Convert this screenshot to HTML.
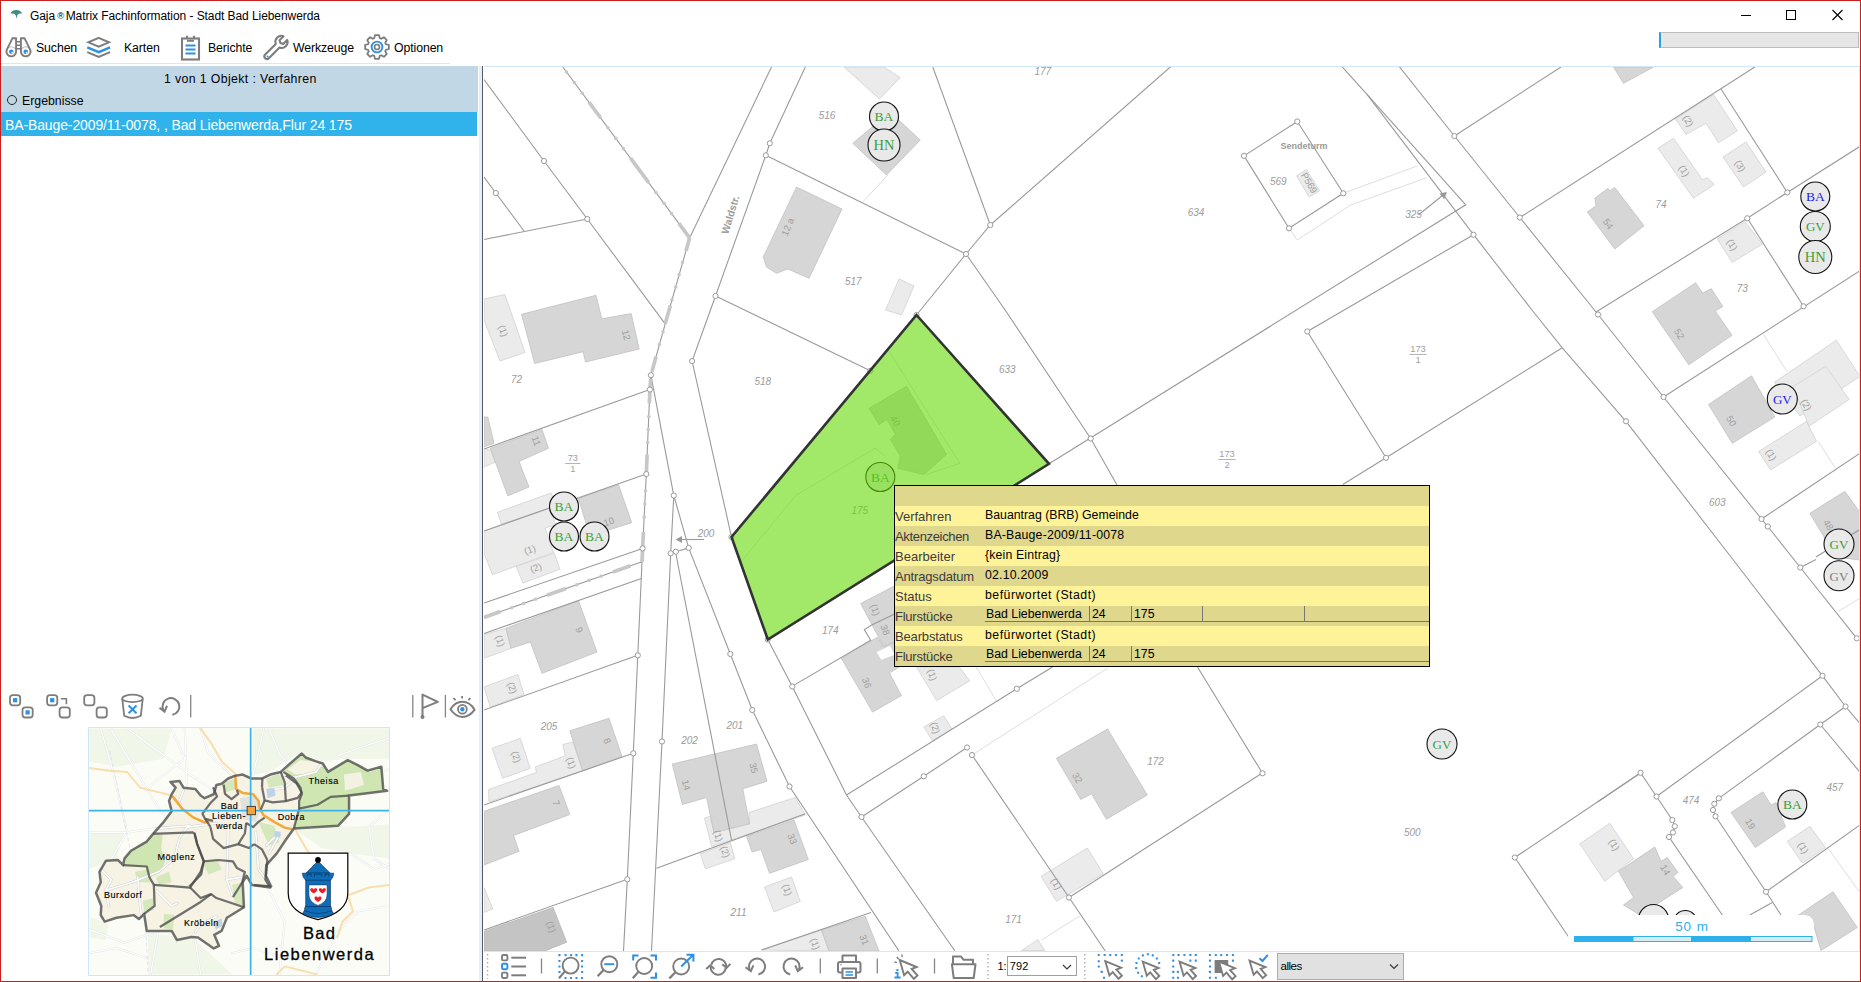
<!DOCTYPE html>
<html><head><meta charset="utf-8"><title>Gaja Matrix</title><style>
*{box-sizing:border-box}
html,body{margin:0;padding:0}
body{width:1861px;height:982px;position:relative;overflow:hidden;background:#fff;font-family:"Liberation Sans",sans-serif;font-size:12px;color:#000}
.abs{position:absolute}
.t{position:absolute;white-space:nowrap;line-height:1}
svg{position:absolute;overflow:visible}
</style></head><body>
<svg style="left:0;top:0" width="30" height="30" viewBox="0 0 30 30"><path d="M10.6,13.6 Q11.6,10 16.3,10 Q21,10 21.9,13.6 Q19,13.2 17.4,15 L16.5,18.6 L15.6,15 Q14,13.2 10.6,13.6 Z" fill="#3d8f88"/></svg>
<div class="t" id="title" style="left:30px;top:10px;font-size:12px;letter-spacing:-0.07px">Gaja<span style="font-size:9.5px;position:relative;top:-1.5px;display:inline-block;width:8px;text-align:center;margin:0 1px 0 1.6px;letter-spacing:0">&#174;</span>Matrix Fachinformation - Stadt Bad Liebenwerda</div>
<svg style="left:1735px;top:5px" width="115" height="20" viewBox="1735 5 115 20"><path d="M1741,15.5 H1751" stroke="#000" stroke-width="1"/><rect x="1786.5" y="10.5" width="9" height="9" fill="none" stroke="#000" stroke-width="1"/><path d="M1832.5,10 L1842.5,20 M1842.5,10 L1832.5,20" stroke="#000" stroke-width="1.1"/></svg>
<div class="abs" style="left:1659px;top:32px;width:200px;height:16px;background:#e6e6e6;border:1px solid #bcbcbc;border-left:2px solid #26a0da"></div>
<svg style="left:0;top:30px" width="40" height="34" viewBox="0 30 40 34"><g fill="none" stroke="#7d7d7d" stroke-width="1.9" stroke-linejoin="round"><path d="M12.4,38.3 H16.1 V51.6 A4.85,4.85 0 1 1 6.7,49.8 Z"/><path d="M24.6,38.3 H20.9 V51.6 A4.85,4.85 0 1 0 30.3,49.8 Z"/><path d="M16.1,41.8 H20.9 M16.1,45.3 H20.9 M16.1,48.8 H20.9" stroke-width="1.6"/><circle cx="11.3" cy="51.6" r="4.85" stroke-width="1.2" stroke-opacity="0.55"/><circle cx="25.7" cy="51.6" r="4.85" stroke-width="1.2" stroke-opacity="0.55"/></g><circle cx="11.3" cy="51.8" r="2.3" fill="#2e8fe3"/><circle cx="25.7" cy="51.8" r="2.3" fill="#2e8fe3"/><circle cx="12.2" cy="52.6" r="0.9" fill="#fff"/><circle cx="26.6" cy="52.6" r="0.9" fill="#fff"/></svg><svg style="left:80px;top:30px" width="40" height="34" viewBox="80 30 40 34"><g fill="none" stroke-linejoin="miter"><path d="M98.7,37.9 L109,42.3 L98.7,46.7 L88.4,42.3 Z" stroke="#7d7d7d" stroke-width="2"/><path d="M87.3,47.3 L98.7,52.2 L110.1,47.3" stroke="#2e8fe3" stroke-width="2.5"/><path d="M87.3,52.1 L98.7,57 L110.1,52.1" stroke="#7d7d7d" stroke-width="2"/></g></svg><svg style="left:181px;top:35px" width="19" height="26" viewBox="0 0 19 26"><g fill="none" stroke="#7d7d7d" stroke-width="2.1"><rect x="1" y="3.5" width="17" height="21"/><path d="M6,3.5 V0.8 M13,3.5 V0.8 M6,5.8 H13" /></g><g stroke="#2e8fe3" stroke-width="1.8"><path d="M4.5,10.5 H14.5 M4.5,14.5 H14.5 M4.5,18.5 H14.5"/></g></svg><svg style="left:262px;top:34px" width="27" height="27" viewBox="0 0 27 27"><path d="M3.2,20.5 L13.8,9.9 A6,6 0 0 1 21.5,2.2 L17.5,6.2 L18.4,9 L21.2,9.9 L25.2,5.9 A6,6 0 0 1 17.5,13.6 L6.9,24.2 A2.6,2.6 0 0 1 3.2,20.5 Z" fill="none" stroke="#7d7d7d" stroke-width="2.1" stroke-linejoin="round"/><circle cx="5.6" cy="22.4" r="1" fill="#2e8fe3"/></svg><svg style="left:363.5px;top:34px" width="26" height="26" viewBox="0 0 26 26"><path d="M21.88,10.25 L24.83,10.97 L24.83,15.03 L21.88,15.75 L21.23,17.34 L22.80,19.93 L19.93,22.80 L17.34,21.23 L15.75,21.88 L15.03,24.83 L10.97,24.83 L10.25,21.88 L8.66,21.23 L6.07,22.80 L3.20,19.93 L4.77,17.34 L4.12,15.75 L1.17,15.03 L1.17,10.97 L4.12,10.25 L4.77,8.66 L3.20,6.07 L6.07,3.20 L8.66,4.77 L10.25,4.12 L10.97,1.17 L15.03,1.17 L15.75,4.12 L17.34,4.77 L19.93,3.20 L22.80,6.07 L21.23,8.66 Z" fill="none" stroke="#7d7d7d" stroke-width="1.8" stroke-linejoin="round"/><circle cx="13" cy="13" r="5.4" fill="none" stroke="#2e8fe3" stroke-width="1.9"/><circle cx="13" cy="13" r="2.5" fill="none" stroke="#7d7d7d" stroke-width="1.7"/></svg>
<div class="t tb" style="left:36px;top:42px;font-size:12.3px;letter-spacing:-0.1px">Suchen</div>
<div class="t tb" style="left:124px;top:42px;font-size:12.3px;letter-spacing:-0.1px">Karten</div>
<div class="t tb" style="left:208px;top:42px;font-size:12.3px;letter-spacing:-0.1px">Berichte</div>
<div class="t tb" style="left:293px;top:42px;font-size:12.3px;letter-spacing:-0.1px">Werkzeuge</div>
<div class="t tb" style="left:394px;top:42px;font-size:12.3px;letter-spacing:-0.1px">Optionen</div>
<div class="abs" style="left:1px;top:63px;width:449px;height:1px;background:#e4e4e4"></div>
<div class="abs" style="left:1px;top:66px;width:477px;height:46px;background:#c2d7e6"></div>
<div class="t" id="hdr" style="left:164px;top:73px;font-size:12.3px;letter-spacing:0.38px">1 von 1 Objekt : Verfahren</div>
<div class="abs" style="left:6.8px;top:94.8px;width:10.6px;height:10.6px;border:1.3px solid #222;border-radius:50%"></div>
<div class="t" id="erg" style="left:22px;top:95px;font-size:12.3px">Ergebnisse</div>
<div class="abs" style="left:1px;top:112px;width:476px;height:24px;background:#30b2ea"></div>
<div class="t" id="row" style="left:5px;top:118px;font-size:14px;color:#fff;letter-spacing:-0.12px">BA-Bauge-2009/11-0078, , Bad Liebenwerda,Flur 24 175</div>
<svg style="left:0;top:690px" width="480" height="32" viewBox="0 690 480 32"><rect x="10" y="695.1" width="10.2" height="10.2" rx="2.8" fill="none" stroke="#7d7d7d" stroke-width="1.8"/><rect x="13" y="698.1" width="4.2" height="4.2" fill="#2e8fe3"/><rect x="22.5" y="707.3" width="10.2" height="10.2" rx="2.8" fill="none" stroke="#7d7d7d" stroke-width="1.8"/><rect x="25.5" y="710.3" width="4.2" height="4.2" fill="#2e8fe3"/><rect x="47.1" y="695.1" width="10.2" height="10.2" rx="2.8" fill="none" stroke="#7d7d7d" stroke-width="1.8"/><rect x="50.1" y="698.1" width="4.2" height="4.2" fill="#2e8fe3"/><rect x="59.6" y="707.3" width="10.2" height="10.2" rx="2.8" fill="none" stroke="#7d7d7d" stroke-width="1.8"/><path d="M60.8,698.8 H66.4 V704.2" fill="none" stroke="#7d7d7d" stroke-width="1.6"/><rect x="84.2" y="695.1" width="10.2" height="10.2" rx="2.8" fill="none" stroke="#7d7d7d" stroke-width="1.8"/><rect x="96.6" y="707.3" width="10.2" height="10.2" rx="2.8" fill="none" stroke="#7d7d7d" stroke-width="1.8"/><ellipse cx="132.5" cy="698.4" rx="10.3" ry="3.7" fill="none" stroke="#7d7d7d" stroke-width="1.8"/><path d="M122.3,699 L124.2,715.8 Q132.5,720.2 140.8,715.8 L142.7,699" fill="none" stroke="#7d7d7d" stroke-width="1.8"/><path d="M128.6,705.5 L136.5,713.2 M136.5,705.5 L128.6,713.2" stroke="#2e8fe3" stroke-width="1.9"/><path d="M172.4,714.8 A8.4,8.4 0 1 0 163.4,710.2" fill="none" stroke="#7d7d7d" stroke-width="2"/><path d="M159.5,707.8 L164.5,711.6 L167,705.8" fill="none" stroke="#7d7d7d" stroke-width="2"/><line x1="190.7" y1="695" x2="190.7" y2="717.5" stroke="#858585" stroke-width="1.3"/><line x1="412.8" y1="695" x2="412.8" y2="717.5" stroke="#858585" stroke-width="1.3"/><line x1="445.4" y1="695" x2="445.4" y2="717.5" stroke="#858585" stroke-width="1.3"/><path d="M422.5,717 V694.6 L437.8,701.8 L422.5,708.2" fill="none" stroke="#7d7d7d" stroke-width="2" stroke-linejoin="round"/><circle cx="422.5" cy="717" r="2" fill="#7d7d7d"/><path d="M450.5,709.3 C454,703.5 458.5,701.8 462.4,701.8 C466.5,701.8 471,703.5 474.5,709.8 C471,714.5 466.5,716.9 462.4,716.9 C458.5,716.9 454,714.5 450.5,709.3 Z" fill="none" stroke="#7d7d7d" stroke-width="2"/><circle cx="462.4" cy="709.2" r="4.4" fill="none" stroke="#7d7d7d" stroke-width="1.8"/><circle cx="462.4" cy="709.2" r="2.2" fill="#2e8fe3"/><path d="M453.4,698.1 L455.6,700.2 M462.1,696.1 V698.6 M470.4,698.1 L468.4,700.2" stroke="#7d7d7d" stroke-width="1.8"/></svg>
<div class="abs" style="left:88px;top:727px;width:302px;height:249px;border:1px solid #cfe6f7;background:#fcfcf6;overflow:hidden"><svg style="left:-4px;top:-6px" width="310" height="258" viewBox="0 0 1179.86 981.948"><polygon points="15,25 330,25 300,140 120,170 15,150" fill="#f0f6e8"/><polygon points="640,25 1160,25 1160,140 1000,140 900,150 820,115 700,190 640,200" fill="#f0f6e8"/><polygon points="240,800 420,830 560,960 240,960" fill="#f0f6e8"/><polygon points="15,420 150,420 120,520 15,560" fill="#f0f6e8"/><polygon points="800,410 1160,390 1160,520 1010,500 900,480" fill="#f0f6e8"/><polygon points="20,740 90,770 80,830 20,820" fill="#f0f6e8"/><g fill="none" stroke="#e3e5e8" stroke-width="8" stroke-linecap="round" stroke-linejoin="round"><polyline points="60,25 110,200 160,420 100,520"/><polyline points="15,420 160,420 300,400"/><polyline points="330,25 380,140 300,200 230,260"/><polyline points="440,25 470,120 560,205"/><polyline points="680,25 660,120 640,200"/><polyline points="1160,60 1040,100 960,130"/><polyline points="1160,330 1080,400 1100,520 1160,560"/><polyline points="700,640 760,760 740,960"/><polyline points="420,830 440,960"/><polyline points="15,880 120,860 240,900"/><polyline points="1160,700 1040,720 960,800 880,960"/><polyline points="560,880 640,860 760,900"/><polyline points="1010,500 1100,560 1160,540"/><polyline points="100,30 190,180 280,330 420,470 400,640 280,790 250,960"/><polyline points="15,790 150,840 290,790"/><polyline points="160,25 400,200 700,400"/><polyline points="380,25 390,300 330,420"/><polyline points="1160,180 1020,200 860,270 720,410"/><polyline points="700,25 740,120 850,250"/><polyline points="530,330 480,420 400,470"/></g><g fill="none" stroke="#ffffff" stroke-width="4.5" stroke-linecap="round" stroke-linejoin="round"><polyline points="60,25 110,200 160,420 100,520"/><polyline points="15,420 160,420 300,400"/><polyline points="330,25 380,140 300,200 230,260"/><polyline points="440,25 470,120 560,205"/><polyline points="680,25 660,120 640,200"/><polyline points="1160,60 1040,100 960,130"/><polyline points="1160,330 1080,400 1100,520 1160,560"/><polyline points="700,640 760,760 740,960"/><polyline points="420,830 440,960"/><polyline points="15,880 120,860 240,900"/><polyline points="1160,700 1040,720 960,800 880,960"/><polyline points="560,880 640,860 760,900"/><polyline points="1010,500 1100,560 1160,540"/><polyline points="100,30 190,180 280,330 420,470 400,640 280,790 250,960"/><polyline points="15,790 150,840 290,790"/><polyline points="160,25 400,200 700,400"/><polyline points="380,25 390,300 330,420"/><polyline points="1160,180 1020,200 860,270 720,410"/><polyline points="700,25 740,120 850,250"/><polyline points="530,330 480,420 400,470"/></g><g fill="none" stroke="#dcdfe2" stroke-width="3" stroke-dasharray="14 10"><polyline points="95,110 150,380 230,760 240,960"/></g><g fill="none" stroke="#f8dfb0" stroke-width="8" stroke-linecap="round"><polyline points="15,175 90,185 160,190 210,250 330,280"/><polyline points="440,25 480,80 520,150 575,200"/><polyline points="800,410 840,480 870,520"/><polyline points="1160,620 1080,630 1000,660 1020,720 980,760 960,820"/><polyline points="880,960 760,930 730,960"/></g><polygon points="570,205 545,215 520,235 500,240 490,275 455,290 440,280 420,255 375,250 360,225 325,228 345,250 330,275 320,300 330,340 300,380 260,425 235,455 175,490 150,520 145,545 125,525 80,528 55,570 60,610 42,650 62,700 60,735 75,760 120,745 185,735 205,750 225,730 235,795 330,795 350,830 405,818 430,820 490,862 510,852 492,810 520,795 540,745 605,705 600,610 615,585 635,620 705,630 687,600 690,545 730,500 763,450 795,405 963,395 1005,350 1005,280 1150,262 1135,255 1128,170 1075,185 1040,165 1000,145 925,190 905,158 880,150 840,135 825,120 790,150 745,190 705,200 675,215 633,215 600,200" fill="#f6f2e4"/><polygon points="755,190 790,150 825,120 840,135 880,150 905,158 925,190 1000,145 1040,165 1075,185 1128,170 1135,255 1150,262 1005,280 1005,350 963,395 795,405 815,330 815,300 825,275 820,250 795,215" fill="#cfe6b3"/><polygon points="820,145 880,152 900,165 870,195 800,200 770,180" fill="#f6f2e4"/><polygon points="985,200 1050,190 1062,240 990,262" fill="#f3f1e2"/><polygon points="150,520 175,490 235,455 260,425 295,430 290,480 305,530 285,575 250,592 235,550 145,545" fill="#cfe6b3"/><polygon points="190,570 240,560 250,610 200,610" fill="#d5e8bc"/><polygon points="270,590 320,570 330,610 280,620" fill="#d5e8bc"/><polygon points="560,620 600,610 605,700 570,690" fill="#d5e8bc"/><polygon points="520,235 570,215 575,255 530,270" fill="#d5e8bc"/><polygon points="660,380 720,395 740,460 700,470" fill="#d5e8bc"/><polygon points="450,540 500,520 520,560 470,580" fill="#d5e8bc"/><polygon points="300,730 340,735 335,790 300,785" fill="#d5e8bc"/><polygon points="220,680 260,670 262,715 225,725" fill="#d5e8bc"/><polygon points="690,215 745,195 755,240 700,250" fill="#d5e8bc"/><polygon points="590,290 650,280 670,330 650,380 600,370" fill="#dcdcdc" opacity="0.8"/><g fill="none" stroke="#cdd0d4" stroke-width="10" stroke-linecap="round" stroke-linejoin="round"><polyline points="80,640 180,610 280,570 340,520 360,440 390,400 500,385"/><polyline points="360,300 375,260"/><polyline points="545,400 540,600 560,660"/><polyline points="540,600 600,590"/><polyline points="650,420 660,560 690,600"/><polyline points="60,560 100,600 80,640 90,700"/><polyline points="270,405 400,395"/><polyline points="740,200 800,210 880,190 900,160"/><polyline points="700,260 760,250 800,215"/><polyline points="420,800 440,770 500,740"/><polyline points="700,500 740,430"/><polyline points="200,590 210,700 215,740"/><polyline points="270,640 330,700 350,690"/><polyline points="690,470 720,440"/></g><g fill="none" stroke="#ffffff" stroke-width="6" stroke-linecap="round" stroke-linejoin="round"><polyline points="80,640 180,610 280,570 340,520 360,440 390,400 500,385"/><polyline points="360,300 375,260"/><polyline points="545,400 540,600 560,660"/><polyline points="540,600 600,590"/><polyline points="650,420 660,560 690,600"/><polyline points="60,560 100,600 80,640 90,700"/><polyline points="270,405 400,395"/><polyline points="740,200 800,210 880,190 900,160"/><polyline points="700,260 760,250 800,215"/><polyline points="420,800 440,770 500,740"/><polyline points="700,500 740,430"/><polyline points="200,590 210,700 215,740"/><polyline points="270,640 330,700 350,690"/><polyline points="690,470 720,440"/></g><polygon points="690,255 720,250 725,280 695,290" fill="#bcd3ea"/><polygon points="720,415 745,418 742,440 722,436" fill="#bcd3ea"/><polygon points="490,760 520,748 522,775 498,790" fill="#bcd3ea"/><g fill="none" stroke="#f2a93b" stroke-width="9.5" stroke-linecap="round" stroke-linejoin="round"><polyline points="335,285 370,330 410,362 455,382 470,380"/><polyline points="572,205 575,255 600,270 640,275 660,300 665,330 680,355 720,380 760,402 785,407"/></g><g fill="none" stroke="#4a4a4a" stroke-opacity="0.78" stroke-width="9.5" stroke-linejoin="round"><polygon points="570,205 545,215 520,235 500,240 490,275 455,290 440,280 420,255 375,250 360,225 325,228 345,250 330,275 320,300 330,340 300,380 260,425 235,455 175,490 150,520 145,545 125,525 80,528 55,570 60,610 42,650 62,700 60,735 75,760 120,745 185,735 205,750 225,730 235,795 330,795 350,830 405,818 430,820 490,862 510,852 492,810 520,795 540,745 605,705 600,610 615,585 635,620 705,630 687,600 690,545 730,500 763,450 795,405 963,395 1005,350 1005,280 1150,262 1135,255 1128,170 1075,185 1040,165 1000,145 925,190 905,158 880,150 840,135 825,120 790,150 745,190 705,200 675,215 633,215 600,200"/><polyline points="145,545 235,550 245,590 262,620 265,700 225,730" stroke-width="8.5"/><polyline points="262,620 330,625 400,630 440,570 452,530 427,465 417,424 410,420 280,425 260,425" stroke-width="8.5"/><polyline points="400,630 440,670 480,655 500,670 560,690 605,705" stroke-width="8.5"/><polyline points="285,780 440,685 480,655" stroke-width="8.5"/><polyline points="487.5,248.2 502.6,283.4 477.4,308.6 447.2,348.9 457.3,369 487.5,376.6" stroke-width="8.5"/><polyline points="527.8,238.1 532.8,273.4 558,293.5 583.2,273.4 578.1,258.2" stroke-width="8.5"/><polyline points="673.8,248.2 683.9,298.5 714.1,306.1 764.5,301 809.8,288.5 824.9,268.3 804.8,233.1 764.5,202.8" stroke-width="8.5"/><polyline points="477.4,399.2 487.5,444.6 527.8,479.8 583.2,464.7 608.4,424.4 613.4,384.1" stroke-width="8.5"/><polyline points="417,424.4 427.1,464.7 452.2,530.2 442.2,580.5 396.9,625.9" stroke-width="8.5"/><polyline points="452.2,530.2 507.6,525.2 563,530.2 578.1,555.4 608.4,570.5 598.3,610.8 563,666.2" stroke-width="8.5"/><polyline points="643.6,464.7 673.8,484.9 694,525.2" stroke-width="8.5"/><polyline points="643.6,464.7 623.5,479.8 583.2,464.7" stroke-width="8.5"/><polyline points="694,525.2 688.9,585.6 709.1,625.9 643.6,620.8" stroke-width="8.5"/><polyline points="457.3,369 477.4,399.2" stroke-width="8.5"/><polyline points="613.4,384.1 640,400 660,380 683.9,364" stroke-width="8.5"/><polyline points="815,330 885,315 935,285 1005,280" stroke-width="8.5"/><polyline points="755,190 795,215 820,250 825,275 815,300 815,330 795,405" stroke-width="8.5"/><polyline points="675,215 673.8,248.2" stroke-width="8.5"/><polyline points="683.9,298.5 668.8,333.8" stroke-width="8.5"/><polyline points="745,190 760,230 764.5,301" stroke-width="8.5"/></g><line x1="630.5" y1="0" x2="630.5" y2="982" stroke="#3cb4e8" stroke-width="6.5"/><line x1="0" y1="337" x2="1180" y2="337" stroke="#3cb4e8" stroke-width="6.5"/><rect x="617" y="321" width="32" height="32" fill="#f7a23b" stroke="#222" stroke-width="3"/><g transform="scale(3.806) translate(-85,-722)"><path d="M288.2,853.2 H347.8 V893 Q347.8,912.5 318,919.6 Q288.2,912.5 288.2,893 Z" fill="#fff" stroke="#000" stroke-width="1.2"/><g fill="#0f6db8" stroke="#0a2d55" stroke-width="0.6" stroke-linejoin="round"><path d="M302.5,913.6 Q318,921.5 333.6,913.6 L331.5,910 Q331.8,907.5 330.5,906 H305.7 Q304.3,907.5 304.6,910 Z"/><path d="M304.2,910.5 Q318,916.5 331.8,910.5" fill="none"/><rect x="305.7" y="879.5" width="24.8" height="27"/><path d="M318,861 L330.3,873.2 H305.8 Z"/><path d="M302.3,873.2 H333.8 L332.8,877.5 Q331.5,878.5 330.6,880.2 H305.6 Q304.6,878.5 303.3,877.5 Z"/><path d="M307.3,876.6 V874.2 H311.2 V876.6 M314.4,876.6 V874.2 H321.8 V876.6 M325,876.6 V874.2 H328.9 V876.6" fill="none" stroke-width="0.7"/></g><circle cx="318" cy="859.9" r="2.9" fill="#000"/><path d="M308.9,884.9 H327.1 V894.5 Q327.1,902.3 318,905.4 Q308.9,902.3 308.9,894.5 Z" fill="#fff" stroke="#0a2d55" stroke-width="0.5"/><path d="M313.7,889.5 c-0.9,-2 -3.9,-1.6 -3.5,0.6 c0.3,1.5 2.2,2.4 3.5,3.5 c1.3,-1.1 3.2,-2 3.5,-3.5 c0.4,-2.2 -2.6,-2.6 -3.5,-0.6 z" fill="#ee1c25"/><path d="M322.4,889.5 c-0.9,-2 -3.9,-1.6 -3.5,0.6 c0.3,1.5 2.2,2.4 3.5,3.5 c1.3,-1.1 3.2,-2 3.5,-3.5 c0.4,-2.2 -2.6,-2.6 -3.5,-0.6 z" fill="#ee1c25"/><path d="M318,897.8 c-0.9,-2 -3.9,-1.6 -3.5,0.6 c0.3,1.5 2.2,2.4 3.5,3.5 c1.3,-1.1 3.2,-2 3.5,-3.5 c0.4,-2.2 -2.6,-2.6 -3.5,-0.6 z" fill="#ee1c25"/></g></svg><div class="t" style="left:234.6px;top:49.32px;width:0;display:flex;justify-content:center;font-size:9px;letter-spacing:0.55px;font-weight:normal;-webkit-text-stroke:0.15px #000"><span>Theisa</span></div><div class="t" style="left:202.3px;top:85.32px;width:0;display:flex;justify-content:center;font-size:9px;letter-spacing:0.55px;font-weight:normal;-webkit-text-stroke:0.15px #000"><span>Dobra</span></div><div class="t" style="left:140.5px;top:73.92px;width:0;display:flex;justify-content:center;font-size:9px;letter-spacing:0.55px;font-weight:normal;-webkit-text-stroke:0.15px #000"><span>Bad</span></div><div class="t" style="left:140px;top:84.42px;width:0;display:flex;justify-content:center;font-size:9px;letter-spacing:0.55px;font-weight:normal;-webkit-text-stroke:0.15px #000"><span>Lieben-</span></div><div class="t" style="left:140.5px;top:94.42px;width:0;display:flex;justify-content:center;font-size:9px;letter-spacing:0.55px;font-weight:normal;-webkit-text-stroke:0.15px #000"><span>werda</span></div><div class="t" style="left:87.4px;top:125.42px;width:0;display:flex;justify-content:center;font-size:9px;letter-spacing:0.55px;font-weight:normal;-webkit-text-stroke:0.15px #000"><span>M&#246;glenz</span></div><div class="t" style="left:34.1px;top:162.72px;width:0;display:flex;justify-content:center;font-size:9px;letter-spacing:0.55px;font-weight:normal;-webkit-text-stroke:0.15px #000"><span>Burxdorf</span></div><div class="t" style="left:112.4px;top:191.12px;width:0;display:flex;justify-content:center;font-size:9px;letter-spacing:0.55px;font-weight:normal;-webkit-text-stroke:0.15px #000"><span>Kr&#246;beln</span></div><div class="t" style="left:230.6px;top:197.12px;width:0;display:flex;justify-content:center;font-size:16.5px;letter-spacing:1.2px;font-weight:normal;-webkit-text-stroke:0.3px #000"><span>Bad</span></div><div class="t" style="left:230.6px;top:218.12px;width:0;display:flex;justify-content:center;font-size:16.5px;letter-spacing:1.5px;font-weight:normal;-webkit-text-stroke:0.3px #000"><span>Liebenwerda</span></div></div>
<div class="abs" style="left:479px;top:66px;width:4px;height:915px;background:#e1f0fc"></div>
<div class="abs" style="left:481.8px;top:66px;width:1.7px;height:915px;background:#5a5a5a"></div>
<div class="abs" style="left:484px;top:66px;width:1376px;height:886px;border-top:1px solid #d3e8f7;border-bottom:1px solid #d3e8f7;border-right:1px solid #d3e8f7;overflow:hidden;background:#fff">
<svg style="left:0;top:0" width="1375" height="884" viewBox="484 67 1375 884">
<g stroke-linejoin="round">
<polygon points="844.0,67.0 884.0,67.0 900.3,77.5 879.5,99.0" fill="#ebebeb" stroke="#d2d2d2" stroke-width="0.8"/>
<polygon points="899.0,279.0 914.0,286.0 901.5,315.0 885.5,310.0" fill="#ebebeb" stroke="#d2d2d2" stroke-width="0.8"/>
<polygon points="484.2,298.8 504.9,294.6 525.0,352.4 500.0,361.0 484.0,320.0" fill="#ebebeb" stroke="#d2d2d2" stroke-width="0.8"/>
<polygon points="484.0,448.0 491.0,450.8 495.3,462.0 484.0,467.0" fill="#ebebeb" stroke="#d2d2d2" stroke-width="0.8"/>
<polygon points="497.4,512.3 551.2,492.9 555.8,505.9 501.6,524.2" fill="#ebebeb" stroke="#d2d2d2" stroke-width="0.8"/>
<polygon points="484.0,531.0 549.7,508.2 555.8,525.0 545.1,528.0 553.5,552.5 492.4,574.7 484.0,553.3" fill="#ebebeb" stroke="#d2d2d2" stroke-width="0.8"/>
<polygon points="516.1,566.3 554.3,553.3 559.9,569.3 523.0,583.1" fill="#ebebeb" stroke="#d2d2d2" stroke-width="0.8"/>
<polygon points="484.0,634.5 506.0,628.3 511.0,648.3 484.0,658.3" fill="#ebebeb" stroke="#d2d2d2" stroke-width="0.8"/>
<polygon points="484.0,687.0 517.8,674.5 524.0,694.5 490.3,707.0" fill="#ebebeb" stroke="#d2d2d2" stroke-width="0.8"/>
<polygon points="562.8,744.5 572.8,742.0 582.8,770.8 489.0,802.0 488.5,789.5 536.5,772.5 535.3,767.0 565.3,755.8" fill="#ebebeb" stroke="#d2d2d2" stroke-width="0.8"/>
<polygon points="492.0,748.3 520.3,738.3 530.3,768.3 502.8,778.3" fill="#ebebeb" stroke="#d2d2d2" stroke-width="0.8"/>
<polygon points="484.0,887.5 492.8,908.8 484.0,912.5" fill="#ebebeb" stroke="#d2d2d2" stroke-width="0.8"/>
<polygon points="704.5,818.0 710.3,816.3 714.0,832.5 749.5,823.8 749.0,812.5 795.3,797.5 805.3,815.0 731.5,840.0 711.5,846.3" fill="#ebebeb" stroke="#d2d2d2" stroke-width="0.8"/>
<polygon points="700.3,853.8 730.3,842.5 734.8,858.8 705.3,868.8" fill="#ebebeb" stroke="#d2d2d2" stroke-width="0.8"/>
<polygon points="764.5,887.0 791.5,877.0 800.3,901.3 774.0,912.0" fill="#ebebeb" stroke="#d2d2d2" stroke-width="0.8"/>
<polygon points="761.5,950.0 821.5,930.0 829.0,951.0" fill="#ebebeb" stroke="#d2d2d2" stroke-width="0.8"/>
<polygon points="916.6,667.2 959.6,667.2 969.7,680.9 936.7,700.5" fill="#ebebeb" stroke="#d2d2d2" stroke-width="0.8"/>
<polygon points="923.8,727.0 943.8,715.8 952.0,729.0 932.5,740.8" fill="#ebebeb" stroke="#d2d2d2" stroke-width="0.8"/>
<polygon points="1041.0,876.3 1087.3,848.0 1103.3,873.8 1056.5,901.3" fill="#ebebeb" stroke="#d2d2d2" stroke-width="0.8"/>
<polygon points="1021.5,950.5 1037.8,939.5 1044.8,950.5" fill="#ebebeb" stroke="#d2d2d2" stroke-width="0.8"/>
<polygon points="1296.5,175.8 1306.5,169.5 1319.5,190.8 1309.0,197.0" fill="#ebebeb" stroke="#d2d2d2" stroke-width="0.8"/>
<polygon points="1675.5,119.0 1713.5,94.5 1737.3,130.8 1718.5,142.8 1706.0,123.3 1686.0,134.5" fill="#ebebeb" stroke="#d2d2d2" stroke-width="0.8"/>
<polygon points="1658.0,148.3 1673.5,138.3 1702.3,179.5 1707.3,177.8 1714.3,184.5 1693.5,198.3" fill="#ebebeb" stroke="#d2d2d2" stroke-width="0.8"/>
<polygon points="1723.0,157.0 1746.0,142.0 1766.0,172.0 1743.5,187.0" fill="#ebebeb" stroke="#d2d2d2" stroke-width="0.8"/>
<polygon points="1717.3,239.0 1744.8,221.5 1762.3,244.0 1732.3,262.5" fill="#ebebeb" stroke="#d2d2d2" stroke-width="0.8"/>
<polygon points="1774.4,382.3 1836.4,340.2 1859.9,376.5 1800.0,416.0" fill="#ebebeb" stroke="#d2d2d2" stroke-width="0.8"/>
<polygon points="1793.0,386.6 1825.7,366.3 1849.2,399.4 1809.0,426.2" fill="#ebebeb" stroke="#d2d2d2" stroke-width="0.8"/>
<polygon points="1758.7,451.4 1806.5,421.5 1816.5,441.2 1770.5,470.0" fill="#ebebeb" stroke="#d2d2d2" stroke-width="0.8"/>
<polygon points="1579.8,843.8 1609.8,823.3 1633.5,858.8 1604.8,881.3" fill="#ebebeb" stroke="#d2d2d2" stroke-width="0.8"/>
<polygon points="1787.3,841.3 1809.8,826.3 1825.5,847.5 1802.3,863.0" fill="#ebebeb" stroke="#d2d2d2" stroke-width="0.8"/>
<polygon points="521.5,314.3 596.0,295.3 601.8,318.8 631.2,313.6 639.2,349.0 585.5,362.0 583.1,351.7 534.7,363.5" fill="#d6d6d6" stroke="#c2c2c2" stroke-width="0.8"/>
<polygon points="796.5,187.0 842.0,209.0 809.0,278.3 787.8,269.0 776.5,273.3 766.5,267.0 763.3,257.0" fill="#d6d6d6" stroke="#c2c2c2" stroke-width="0.8"/>
<polygon points="852.8,143.3 886.5,175.0 920.3,140.0 890.0,112.0" fill="#d6d6d6" stroke="#c2c2c2" stroke-width="0.8"/>
<polygon points="490.3,448.3 542.0,429.5 548.5,448.3 519.0,461.5 529.0,487.0 507.8,495.8" fill="#d6d6d6" stroke="#c2c2c2" stroke-width="0.8"/>
<polygon points="484.0,417.0 487.8,417.0 494.0,443.3 484.0,447.0" fill="#d6d6d6" stroke="#c2c2c2" stroke-width="0.8"/>
<polygon points="578.3,498.3 618.5,484.8 631.7,522.7 590.0,535.8" fill="#d6d6d6" stroke="#c2c2c2" stroke-width="0.8"/>
<polygon points="506.0,628.3 578.5,600.8 597.0,652.0 542.0,673.3 530.3,642.0 511.0,648.3" fill="#d6d6d6" stroke="#c2c2c2" stroke-width="0.8"/>
<polygon points="569.8,730.8 609.0,718.3 622.0,756.5 582.8,770.8" fill="#d6d6d6" stroke="#c2c2c2" stroke-width="0.8"/>
<polygon points="484.0,811.3 559.0,785.5 569.8,814.5 513.5,835.5 519.0,851.3 484.0,865.0" fill="#d6d6d6" stroke="#c2c2c2" stroke-width="0.8"/>
<polygon points="672.3,764.0 756.5,744.0 767.0,781.3 742.8,788.8 749.5,823.8 714.0,832.5 706.5,797.5 682.3,804.5" fill="#d6d6d6" stroke="#c2c2c2" stroke-width="0.8"/>
<polygon points="746.5,836.3 794.0,820.0 808.3,859.5 769.5,873.3 761.0,849.5 752.0,852.0" fill="#d6d6d6" stroke="#c2c2c2" stroke-width="0.8"/>
<polygon points="821.5,930.0 865.3,916.3 879.0,951.0 829.0,951.0" fill="#d6d6d6" stroke="#c2c2c2" stroke-width="0.8"/>
<polygon points="860.7,603.5 900.0,583.0 900.0,639.0 883.6,646.6" fill="#d6d6d6" stroke="#c2c2c2" stroke-width="0.8"/>
<polygon points="841.4,658.5 877.2,637.3 883.6,646.6 900.0,640.0 900.0,666.5 889.4,673.0 901.5,695.6 872.6,712.1" fill="#d6d6d6" stroke="#c2c2c2" stroke-width="0.8"/>
<polygon points="1056.3,758.3 1107.5,729.0 1147.3,795.0 1106.5,819.3 1091.5,793.8 1080.8,799.5" fill="#d6d6d6" stroke="#c2c2c2" stroke-width="0.8"/>
<polygon points="1587.3,212.0 1596.0,205.8 1594.8,198.3 1608.0,188.3 1609.8,190.8 1614.8,187.5 1644.0,225.8 1614.8,249.0" fill="#d6d6d6" stroke="#c2c2c2" stroke-width="0.8"/>
<polygon points="1652.2,311.7 1695.6,282.8 1702.7,293.1 1711.2,288.6 1722.8,306.4 1715.3,311.1 1732.0,335.3 1688.8,364.8" fill="#d6d6d6" stroke="#c2c2c2" stroke-width="0.8"/>
<polygon points="1708.5,404.5 1751.5,375.8 1774.8,417.0 1732.3,443.3" fill="#d6d6d6" stroke="#c2c2c2" stroke-width="0.8"/>
<polygon points="1809.8,513.3 1844.8,491.3 1859.8,512.0 1859.8,560.0 1836.0,557.0" fill="#d6d6d6" stroke="#c2c2c2" stroke-width="0.8"/>
<polygon points="1613.5,67.0 1653.5,67.0 1623.5,83.3" fill="#d6d6d6" stroke="#c2c2c2" stroke-width="0.8"/>
<polygon points="1618.5,871.3 1654.8,847.0 1661.0,861.3 1667.3,857.5 1678.0,872.5 1673.0,876.3 1682.8,887.5 1640.0,915.0 1623.5,905.0 1633.5,897.5" fill="#d6d6d6" stroke="#c2c2c2" stroke-width="0.8"/>
<polygon points="1731.0,812.5 1762.8,791.8 1771.0,805.0 1776.0,802.5 1785.5,827.0 1755.3,847.5" fill="#d6d6d6" stroke="#c2c2c2" stroke-width="0.8"/>
<polygon points="1798.5,915.0 1833.0,891.8 1857.3,927.5 1821.0,950.5 1812.0,920.0" fill="#d6d6d6" stroke="#c2c2c2" stroke-width="0.8"/>
<polygon points="869.0,408.3 906.5,386.3 946.5,454.5 924.0,474.5 897.8,468.3 900.3,455.8 890.3,439.5 895.3,434.5 887.0,419.5 879.0,424.5" fill="#d6d6d6" stroke="#c2c2c2" stroke-width="0.8"/>
<polygon points="876.6,651.9 890,645.7 894.6,654.7 881.2,659.8" fill="#fff"/>
<polygon points="484,931.4 553.1,907.4 566.7,942.2 544.9,951 484,951" fill="#c4c4c4" stroke="#b8b8b8" stroke-width="0.8"/>
</g>
<g fill="none" stroke="#dedede" stroke-width="1">
<polyline points="1343.3,193.3 1417.3,165.9"/>
<polyline points="1289.0,228.3 1297.3,240.0 1350.6,205.0 1426.6,177.8"/>
<polyline points="1763.5,334.5 1787.3,372.0"/>
<polyline points="1818.5,442.0 1835.5,468.3"/>
<polyline points="1838.0,611.5 1859.8,598.3"/>
<polyline points="1828.5,848.8 1859.8,892.5"/>
<polyline points="972.0,755.0 1107.5,668.3"/>
<polyline points="976.3,667.0 996.3,700.8"/>
<polyline points="1080.3,915.5 1041.5,940.0"/>
<polyline points="887.8,175.0 862.8,202.0"/>
<polyline points="741.4,561.2 796.0,495.3 875.1,448.2 884.6,455.7"/>
<polyline points="888.3,350.3 959.9,463.3 926.0,474.6"/>
</g>
<g fill="none" stroke="#9a9a9a" stroke-width="1.1">
<polyline points="484.0,79.5 544.0,161.0 587.3,219.0 665.2,323.9"/>
<polyline points="484.0,177.0 495.8,193.0 524.0,231.0"/>
<polyline points="484.0,239.5 587.3,219.0"/>
<polyline points="771.5,67.0 689.6,237.9"/>
<polyline points="562.8,67.0 689.6,237.9 665.2,323.9 650.9,375.2 649.9,389.5 646.3,474.1 642.6,548.4 642.0,562.0 637.8,655.3 633.3,753.3 627.3,879.3 623.5,951.0"/>
<polyline points="642.1,561.7 484.0,617.4"/>
<polyline points="805.3,67.0 769.8,143.3 765.8,155.3 715.5,296.0 692.1,361.1 731.5,537.0 767.8,639.5 792.3,686.5 846.5,795.0 861.5,817.0 949.0,942.5 955.0,951.0"/>
<polyline points="765.8,155.3 966.0,254.0"/>
<polyline points="715.5,296.0 870.3,370.8"/>
<polyline points="932.8,67.0 990.3,225.0"/>
<polyline points="1170.3,67.0 990.3,225.0 966.0,254.0 916.5,315.0"/>
<polyline points="966.0,254.0 1006.5,312.0 1090.7,438.5 1117.0,485.0 1197.5,667.0 1262.5,773.3"/>
<polyline points="1297.3,121.5 1244.0,155.8 1289.0,228.3 1343.3,193.3 1297.3,121.5"/>
<polyline points="1341.9,66.6 1367.0,94.4 1473.5,234.7 1533.5,312.0 1562.3,347.8 1626.0,421.3 1731.0,557.0 1822.5,675.8 1845.5,706.5 1859.8,723.3"/>
<polyline points="1367.0,94.4 1465.8,204.8 1049.0,463.8"/>
<polyline points="1399.3,66.6 1454.4,136.0 1519.8,217.5 1596.0,312.0 1598.0,314.5 1663.5,397.0 1761.5,519.0 1767.8,526.5 1800.3,567.5 1856.8,638.3"/>
<polyline points="1454.4,136.0 1561.0,67.0"/>
<polyline points="1519.8,217.5 1754.8,67.0"/>
<polyline points="1473.5,234.7 1307.3,331.5 1386.0,457.8"/>
<polyline points="1342.8,484.5 1386.0,457.8 1562.3,347.8"/>
<polyline points="1596.0,312.0 1747.3,218.3 1787.3,192.5 1859.8,146.5"/>
<polyline points="1721.0,89.0 1787.3,192.5"/>
<polyline points="1747.3,218.3 1803.5,306.3"/>
<polyline points="1663.5,397.0 1859.8,270.8"/>
<polyline points="1761.5,519.0 1859.8,453.3"/>
<polyline points="1816.0,557.0 1859.8,529.5"/>
<polyline points="1800.3,567.5 1816.0,559.5"/>
<polyline points="1822.5,675.8 1656.5,796.5"/>
<polyline points="1597.5,802.0 1640.5,772.8 1656.5,796.5 1672.3,820.0 1674.8,826.3 1673.0,832.5 1669.0,837.0 1722.3,915.0 1747.0,951.0"/>
<polyline points="1845.5,706.5 1820.3,724.5 1718.8,798.3 1714.3,803.8 1713.0,810.0 1715.5,816.3 1766.0,891.8 1781.0,915.0 1804.0,951.0"/>
<polyline points="1820.3,724.5 1859.8,772.0"/>
<polyline points="1640.5,773.0 1514.8,857.5 1567.3,935.0 1578.0,951.0"/>
<polyline points="1766.0,891.8 1859.8,825.0"/>
<polyline points="1749.8,915.0 1772.3,902.5"/>
<polyline points="649.9,389.5 484.0,449.0"/>
<polyline points="646.3,474.1 484.0,531.0"/>
<polyline points="650.9,375.2 673.8,495.5 688.7,547.9 730.3,654.0 752.3,710.0 789.5,786.5 899.0,951.0"/>
<polyline points="673.8,495.5 670.7,553.3 662.0,741.5 651.5,951.0"/>
<polyline points="675.8,551.7 676.5,557.0 731.5,840.0"/>
<polyline points="688.7,547.9 675.8,551.7"/>
<polyline points="656.5,868.3 805.3,813.8"/>
<polyline points="642.6,548.4 484.0,603.0"/>
<polyline points="641.4,578.5 484.0,633.5"/>
<polyline points="637.8,655.3 484.0,710.0"/>
<polyline points="633.3,753.3 484.0,805.0"/>
<polyline points="627.3,879.3 484.0,930.0"/>
<polyline points="791.9,686.4 870.7,640.2 864.3,629.6 871.7,625.0"/>
<polyline points="871.7,625.0 894.6,614.0"/>
<polyline points="846.5,795.0 1016.8,688.8 1052.5,667.0"/>
<polyline points="861.5,817.0 923.8,776.3 967.0,747.5"/>
<polyline points="972.0,755.0 1069.0,897.5 1105.3,951.0"/>
<polyline points="1069.0,897.5 1262.3,773.0"/>
<polyline points="761.5,950.0 871.0,912.5"/>
<polyline points="704.0,539.5 679.0,539.5"/>
<polyline points="1418.7,214.8 1444.0,194.3"/>
</g>
<g fill="none" stroke="#c7c7c7" stroke-width="3.7" stroke-linecap="butt">
<line x1="588.9" y1="102.1" x2="600.7" y2="118.0"/>
<line x1="630.5" y1="158.2" x2="648.7" y2="182.7"/>
<line x1="678.9" y1="223.4" x2="689.6" y2="237.9"/>
<line x1="689.6" y1="237.9" x2="686.0" y2="250.7"/>
<line x1="670.4" y1="305.4" x2="665.2" y2="323.8"/>
<line x1="656.1" y1="356.4" x2="651.9" y2="371.7"/>
<line x1="650.6" y1="378.9" x2="649.3" y2="403.3"/>
<line x1="647.1" y1="454.5" x2="646.4" y2="472.0"/>
<line x1="643.4" y1="532.0" x2="642.0" y2="562.0"/>
<line x1="630.5" y1="565.8" x2="612.9" y2="572.0"/>
<line x1="566.1" y1="588.5" x2="546.9" y2="595.2"/>
<line x1="500.4" y1="611.6" x2="484.0" y2="617.4"/>
</g><g fill="#c7c7c7">
<circle cx="566.5" cy="72.0" r="1.8"/>
<circle cx="574.5" cy="82.8" r="1.8"/>
<circle cx="582.3" cy="93.3" r="1.8"/>
<circle cx="607.9" cy="127.8" r="1.8"/>
<circle cx="615.8" cy="138.4" r="1.8"/>
<circle cx="623.5" cy="148.8" r="1.8"/>
<circle cx="655.9" cy="192.5" r="1.8"/>
<circle cx="664.0" cy="203.3" r="1.8"/>
<circle cx="671.6" cy="213.6" r="1.8"/>
<circle cx="682.6" cy="262.5" r="1.8"/>
<circle cx="679.1" cy="274.8" r="1.8"/>
<circle cx="675.7" cy="287.0" r="1.8"/>
<circle cx="672.0" cy="299.8" r="1.8"/>
<circle cx="663.0" cy="331.9" r="1.8"/>
<circle cx="659.4" cy="344.5" r="1.8"/>
<circle cx="648.8" cy="416.5" r="1.8"/>
<circle cx="648.2" cy="429.5" r="1.8"/>
<circle cx="647.6" cy="442.5" r="1.8"/>
<circle cx="645.5" cy="490.8" r="1.8"/>
<circle cx="644.8" cy="504.0" r="1.8"/>
<circle cx="644.2" cy="517.0" r="1.8"/>
<circle cx="601.0" cy="576.2" r="1.8"/>
<circle cx="589.1" cy="580.4" r="1.8"/>
<circle cx="576.8" cy="584.7" r="1.8"/>
<circle cx="535.6" cy="599.2" r="1.8"/>
<circle cx="523.6" cy="603.4" r="1.8"/>
<circle cx="511.6" cy="607.7" r="1.8"/>
</g>
<polygon points="675.5,539.5 682,536 682,543" fill="#999"/>
<polygon points="1447,192 1439.5,193.5 1444.2,199.2" fill="#999"/>
<g fill="#fff" stroke="#9a9a9a" stroke-width="1">
<circle cx="544.0" cy="161.0" r="2.6"/>
<circle cx="587.3" cy="219.0" r="2.6"/>
<circle cx="495.8" cy="193.0" r="2.6"/>
<circle cx="769.8" cy="143.3" r="2.6"/>
<circle cx="765.8" cy="155.3" r="2.6"/>
<circle cx="715.5" cy="296.0" r="2.6"/>
<circle cx="692.1" cy="361.1" r="2.6"/>
<circle cx="731.5" cy="537.0" r="2.6"/>
<circle cx="767.8" cy="639.5" r="2.6"/>
<circle cx="870.3" cy="370.8" r="2.6"/>
<circle cx="916.5" cy="315.0" r="2.6"/>
<circle cx="990.3" cy="225.0" r="2.6"/>
<circle cx="966.0" cy="254.0" r="2.6"/>
<circle cx="1090.7" cy="438.5" r="2.6"/>
<circle cx="1297.3" cy="121.5" r="2.6"/>
<circle cx="1244.0" cy="155.8" r="2.6"/>
<circle cx="1289.0" cy="228.3" r="2.6"/>
<circle cx="1343.3" cy="193.3" r="2.6"/>
<circle cx="1454.4" cy="136.0" r="2.6"/>
<circle cx="1519.8" cy="217.5" r="2.6"/>
<circle cx="1473.5" cy="234.7" r="2.6"/>
<circle cx="1307.3" cy="331.5" r="2.6"/>
<circle cx="1386.0" cy="457.8" r="2.6"/>
<circle cx="1626.0" cy="421.3" r="2.6"/>
<circle cx="1598.0" cy="314.5" r="2.6"/>
<circle cx="1663.5" cy="397.0" r="2.6"/>
<circle cx="1761.5" cy="519.0" r="2.6"/>
<circle cx="1767.8" cy="526.5" r="2.6"/>
<circle cx="1800.3" cy="567.5" r="2.6"/>
<circle cx="1856.8" cy="638.3" r="2.6"/>
<circle cx="1822.5" cy="675.8" r="2.6"/>
<circle cx="1845.5" cy="706.5" r="2.6"/>
<circle cx="1820.3" cy="724.5" r="2.6"/>
<circle cx="1718.8" cy="798.3" r="2.6"/>
<circle cx="1714.3" cy="803.8" r="2.6"/>
<circle cx="1713.0" cy="810.0" r="2.6"/>
<circle cx="1715.5" cy="816.3" r="2.6"/>
<circle cx="1656.5" cy="796.5" r="2.6"/>
<circle cx="1640.5" cy="772.8" r="2.6"/>
<circle cx="1672.3" cy="820.0" r="2.6"/>
<circle cx="1674.8" cy="826.3" r="2.6"/>
<circle cx="1673.0" cy="832.5" r="2.6"/>
<circle cx="1669.0" cy="837.0" r="2.6"/>
<circle cx="1514.8" cy="857.5" r="2.6"/>
<circle cx="1766.0" cy="891.8" r="2.6"/>
<circle cx="1787.3" cy="192.5" r="2.6"/>
<circle cx="1747.3" cy="218.3" r="2.6"/>
<circle cx="1803.5" cy="306.3" r="2.6"/>
<circle cx="650.9" cy="375.2" r="2.6"/>
<circle cx="649.9" cy="389.5" r="2.6"/>
<circle cx="646.3" cy="474.1" r="2.6"/>
<circle cx="642.6" cy="548.4" r="2.6"/>
<circle cx="673.8" cy="495.5" r="2.6"/>
<circle cx="688.7" cy="547.9" r="2.6"/>
<circle cx="670.7" cy="553.3" r="2.6"/>
<circle cx="675.8" cy="551.7" r="2.6"/>
<circle cx="637.8" cy="655.3" r="2.6"/>
<circle cx="633.3" cy="753.3" r="2.6"/>
<circle cx="627.3" cy="879.3" r="2.6"/>
<circle cx="662.0" cy="741.5" r="2.6"/>
<circle cx="730.3" cy="654.0" r="2.6"/>
<circle cx="752.3" cy="710.0" r="2.6"/>
<circle cx="789.5" cy="786.5" r="2.6"/>
<circle cx="792.3" cy="686.5" r="2.6"/>
<circle cx="1016.8" cy="688.8" r="2.6"/>
<circle cx="923.8" cy="776.3" r="2.6"/>
<circle cx="967.0" cy="747.5" r="2.6"/>
<circle cx="972.0" cy="755.0" r="2.6"/>
<circle cx="1069.0" cy="897.5" r="2.6"/>
<circle cx="1262.5" cy="773.3" r="2.6"/>
<circle cx="861.5" cy="817.0" r="2.6"/>
</g>
<g font-family="Liberation Sans, sans-serif" font-size="10" font-style="italic" fill="#9c9c9c" text-anchor="middle">
<text x="827.0" y="118.8">516</text>
<text x="853.3" y="284.6">517</text>
<text x="1042.8" y="75.3">177</text>
<text x="1196.0" y="215.8">634</text>
<text x="1278.3" y="184.6">569</text>
<text x="1661.0" y="207.8">74</text>
<text x="1742.3" y="292.1">73</text>
<text x="1413.5" y="218.3">325</text>
<text x="516.5" y="383.3">72</text>
<text x="762.8" y="384.6">518</text>
<text x="859.8" y="513.8">175</text>
<text x="1007.3" y="372.8">633</text>
<text x="1717.3" y="506.3">603</text>
<text x="549.0" y="730.3">205</text>
<text x="689.5" y="744.1">202</text>
<text x="734.8" y="729.3">201</text>
<text x="830.3" y="633.8">174</text>
<text x="1155.5" y="764.6">172</text>
<text x="738.5" y="915.8">211</text>
<text x="1013.5" y="923.3">171</text>
<text x="1412.3" y="835.6">500</text>
<text x="1691.0" y="803.8">474</text>
<text x="1834.8" y="791.3">457</text>
<text x="706.0" y="537.1">200</text>
</g>
<g font-family="Liberation Sans, sans-serif" font-size="9.3" fill="#a0a0a0" text-anchor="middle">
<text x="572.8" y="461.3">73</text><text x="572.8" y="472.1">1</text><line x1="565.1" y1="463.5" x2="580.4" y2="463.5" stroke="#a2a2a2" stroke-width="0.8"/>
<text x="1227.0" y="457.3">173</text><text x="1227.0" y="468.1">2</text><line x1="1218.3" y1="459.5" x2="1235.7" y2="459.5" stroke="#a2a2a2" stroke-width="0.8"/>
<text x="1418.0" y="352.3">173</text><text x="1418.0" y="363.1">1</text><line x1="1409.3" y1="354.5" x2="1426.7" y2="354.5" stroke="#a2a2a2" stroke-width="0.8"/>
</g>
<g font-family="Liberation Sans, sans-serif" font-size="9.5" fill="#9e9e9e" text-anchor="middle">
<text transform="translate(626.0,335.0) rotate(75)" y="3">12</text>
<text transform="translate(788.0,227.0) rotate(-68)" y="3">12 a</text>
<text transform="translate(503.0,331.0) rotate(70)" y="3">(1)</text>
<text transform="translate(536.0,441.0) rotate(70)" y="3">11</text>
<text transform="translate(609.0,522.0) rotate(-20)" y="3">10</text>
<text transform="translate(530.0,550.0) rotate(-20)" y="3">(1)</text>
<text transform="translate(536.0,568.0) rotate(-20)" y="3">(2)</text>
<text transform="translate(579.0,630.0) rotate(70)" y="3">9</text>
<text transform="translate(500.0,641.0) rotate(70)" y="3">(1)</text>
<text transform="translate(512.0,688.0) rotate(70)" y="3">(2)</text>
<text transform="translate(607.0,741.0) rotate(70)" y="3">8</text>
<text transform="translate(571.0,763.0) rotate(70)" y="3">(1)</text>
<text transform="translate(516.0,757.0) rotate(70)" y="3">(2)</text>
<text transform="translate(556.0,803.0) rotate(70)" y="3">7</text>
<text transform="translate(551.0,927.0) rotate(70)" y="3">(1)</text>
<text transform="translate(686.0,785.0) rotate(75)" y="3">14</text>
<text transform="translate(753.5,768.0) rotate(75)" y="3">35</text>
<text transform="translate(792.0,839.0) rotate(70)" y="3">33</text>
<text transform="translate(718.0,836.0) rotate(70)" y="3">(1)</text>
<text transform="translate(725.0,852.0) rotate(70)" y="3">(2)</text>
<text transform="translate(787.0,890.0) rotate(70)" y="3">(1)</text>
<text transform="translate(864.0,940.0) rotate(70)" y="3">31</text>
<text transform="translate(815.0,944.0) rotate(70)" y="3">(1)</text>
<text transform="translate(875.0,610.0) rotate(70)" y="3">(1)</text>
<text transform="translate(885.0,630.0) rotate(70)" y="3">38</text>
<text transform="translate(866.5,683.0) rotate(70)" y="3">36</text>
<text transform="translate(932.0,675.0) rotate(70)" y="3">(1)</text>
<text transform="translate(935.0,728.0) rotate(70)" y="3">(2)</text>
<text transform="translate(1077.0,778.0) rotate(60)" y="3">32</text>
<text transform="translate(1056.0,884.0) rotate(60)" y="3">(1)</text>
<text transform="translate(1608.0,224.0) rotate(55)" y="3">54</text>
<text transform="translate(1688.0,121.0) rotate(60)" y="3">(2)</text>
<text transform="translate(1684.0,171.0) rotate(60)" y="3">(1)</text>
<text transform="translate(1740.0,166.0) rotate(60)" y="3">(3)</text>
<text transform="translate(1732.0,245.0) rotate(60)" y="3">(1)</text>
<text transform="translate(1679.0,334.0) rotate(60)" y="3">52</text>
<text transform="translate(1731.0,421.0) rotate(60)" y="3">50</text>
<text transform="translate(1806.0,405.0) rotate(60)" y="3">(2)</text>
<text transform="translate(1771.0,455.0) rotate(60)" y="3">(1)</text>
<text transform="translate(1828.0,525.0) rotate(60)" y="3">48</text>
<text transform="translate(1614.0,845.0) rotate(60)" y="3">(1)</text>
<text transform="translate(1665.0,870.0) rotate(60)" y="3">14</text>
<text transform="translate(1750.0,824.0) rotate(60)" y="3">19</text>
<text transform="translate(1803.0,848.0) rotate(60)" y="3">(1)</text>
<text transform="translate(1309.0,183.0) rotate(60)" y="3">P569</text>
<text transform="translate(895.0,421.0) rotate(60)" y="3">40</text>
</g>
<text transform="translate(730,214.5) rotate(-73)" y="4" font-family="Liberation Sans, sans-serif" font-size="10.3" font-weight="bold" fill="#9c9c9c" text-anchor="middle">Waldstr.</text>
<text x="1304" y="148.8" font-family="Liberation Sans, sans-serif" font-size="9" font-weight="bold" fill="#9a9a9a" text-anchor="middle">Sendeturm</text>
<circle cx="880.3" cy="477.0" r="14.5" fill="#e9e9e9" stroke="#111" stroke-width="1.1"/><text x="880.3" y="481.7" font-family="Liberation Serif, serif" font-size="13.5" fill="#3aa03a" text-anchor="middle">BA</text>
<polygon points="916.5,315 1049,463.8 767.8,639.5 731.5,537" fill="rgba(100,218,7,0.6)" stroke="#333" stroke-width="2.6" stroke-linejoin="miter"/>
<circle cx="884.0" cy="116.5" r="14.5" fill="#e9e9e9" stroke="#111" stroke-width="1.1"/><text x="884.0" y="121.2" font-family="Liberation Serif, serif" font-size="13.5" fill="#3aa03a" text-anchor="middle">BA</text>
<circle cx="884.0" cy="145.0" r="16.0" fill="#e9e9e9" stroke="#111" stroke-width="1.1"/><text x="884.0" y="149.7" font-family="Liberation Serif, serif" font-size="14.5" fill="#3aa03a" text-anchor="middle">HN</text>
<circle cx="1815.3" cy="196.5" r="14.5" fill="#e9e9e9" stroke="#111" stroke-width="1.1"/><text x="1815.3" y="201.2" font-family="Liberation Serif, serif" font-size="13.5" fill="#1c1cf0" text-anchor="middle">BA</text>
<circle cx="1815.3" cy="226.5" r="15.0" fill="#e9e9e9" stroke="#111" stroke-width="1.1"/><text x="1815.3" y="231.2" font-family="Liberation Serif, serif" font-size="13" fill="#3aa03a" text-anchor="middle">GV</text>
<circle cx="1815.3" cy="257.0" r="16.5" fill="#e9e9e9" stroke="#111" stroke-width="1.1"/><text x="1815.3" y="261.7" font-family="Liberation Serif, serif" font-size="14.5" fill="#3aa03a" text-anchor="middle">HN</text>
<circle cx="1782.3" cy="399.0" r="15.0" fill="#e9e9e9" stroke="#111" stroke-width="1.1"/><text x="1782.3" y="403.7" font-family="Liberation Serif, serif" font-size="13" fill="#1c1cf0" text-anchor="middle">GV</text>
<circle cx="1839.0" cy="544.0" r="15.0" fill="#e9e9e9" stroke="#111" stroke-width="1.1"/><text x="1839.0" y="548.7" font-family="Liberation Serif, serif" font-size="13" fill="#3aa03a" text-anchor="middle">GV</text>
<circle cx="1839.0" cy="575.8" r="15.0" fill="#e9e9e9" stroke="#111" stroke-width="1.1"/><text x="1839.0" y="580.5" font-family="Liberation Serif, serif" font-size="13" fill="#808080" text-anchor="middle">GV</text>
<circle cx="564.0" cy="506.5" r="14.5" fill="#e9e9e9" stroke="#111" stroke-width="1.1"/><text x="564.0" y="511.2" font-family="Liberation Serif, serif" font-size="13.5" fill="#3aa03a" text-anchor="middle">BA</text>
<circle cx="564.0" cy="536.5" r="14.5" fill="#e9e9e9" stroke="#111" stroke-width="1.1"/><text x="564.0" y="541.2" font-family="Liberation Serif, serif" font-size="13.5" fill="#3aa03a" text-anchor="middle">BA</text>
<circle cx="594.5" cy="536.5" r="14.5" fill="#e9e9e9" stroke="#111" stroke-width="1.1"/><text x="594.5" y="541.2" font-family="Liberation Serif, serif" font-size="13.5" fill="#3aa03a" text-anchor="middle">BA</text>
<circle cx="1442.0" cy="744.0" r="15.0" fill="#e9e9e9" stroke="#111" stroke-width="1.1"/><text x="1442.0" y="748.7" font-family="Liberation Serif, serif" font-size="13" fill="#3aa03a" text-anchor="middle">GV</text>
<circle cx="1792.3" cy="804.5" r="14.5" fill="#e9e9e9" stroke="#111" stroke-width="1.1"/><text x="1792.3" y="809.2" font-family="Liberation Serif, serif" font-size="13.5" fill="#3aa03a" text-anchor="middle">BA</text>
<circle cx="1653.5" cy="919.5" r="15.0" fill="#e9e9e9" stroke="#111" stroke-width="1.1"/><text x="1653.5" y="924.2" font-family="Liberation Serif, serif" font-size="13" fill="#3aa03a" text-anchor="middle"></text>
<circle cx="1685.3" cy="922.5" r="12.0" fill="#e9e9e9" stroke="#111" stroke-width="1.1"/><text x="1685.3" y="927.2" font-family="Liberation Serif, serif" font-size="13" fill="#3aa03a" text-anchor="middle"></text>
<path d="M1568,951 V925 Q1568,915 1580,915 H1803 Q1814,915 1814,926 V951 Z" fill="#fff"/>
<rect x="1574.5" y="936.5" width="237.5" height="5" fill="#d6ebf8" stroke="#2eb0ea" stroke-width="1"/>
<rect x="1574" y="936" width="59.5" height="6" fill="#2eb0ea"/><rect x="1691" y="936" width="60" height="6" fill="#2eb0ea"/>
<text x="1692" y="930.5" font-family="Liberation Sans, sans-serif" font-size="13.5" letter-spacing="0.9" fill="#2eb0ea" text-anchor="middle">50 m</text>
</svg></div>
<div class="abs" style="left:894px;top:485px;width:536px;height:182px;border:1px solid #000;background:#fff399;overflow:hidden"><div class="abs" style="left:0;top:0px;width:534px;height:20px;background:#dfd78c"></div><div class="abs" style="left:0;top:20px;width:534px;height:20px;background:#fff399"></div><div class="t tl" style="left:0px;top:24px;font-size:13px;color:#3c3c3c;letter-spacing:0px">Verfahren</div><div class="t tv" style="left:90px;top:23px;font-size:12.3px;letter-spacing:0px">Bauantrag (BRB) Gemeinde</div><div class="abs" style="left:0;top:40px;width:534px;height:20px;background:#dfd78c"></div><div class="t tl" style="left:0px;top:44px;font-size:13px;color:#3c3c3c;letter-spacing:-0.34px">Aktenzeichen</div><div class="t tv" style="left:90px;top:43px;font-size:12.3px;letter-spacing:0.2px">BA-Bauge-2009/11-0078</div><div class="abs" style="left:0;top:60px;width:534px;height:20px;background:#fff399"></div><div class="t tl" style="left:0px;top:64px;font-size:13px;color:#3c3c3c;letter-spacing:0px">Bearbeiter</div><div class="t tv" style="left:90px;top:63px;font-size:12.3px;letter-spacing:0.15px">{kein Eintrag}</div><div class="abs" style="left:0;top:80px;width:534px;height:20px;background:#dfd78c"></div><div class="t tl" style="left:0px;top:84px;font-size:13px;color:#3c3c3c;letter-spacing:-0.16px">Antragsdatum</div><div class="t tv" style="left:90px;top:83px;font-size:12.3px;letter-spacing:0.2px">02.10.2009</div><div class="abs" style="left:0;top:100px;width:534px;height:20px;background:#fff399"></div><div class="t tl" style="left:0px;top:104px;font-size:13px;color:#3c3c3c;letter-spacing:0px">Status</div><div class="t tv" style="left:90px;top:103px;font-size:12.3px;letter-spacing:0.49px">bef&#252;rwortet (Stadt)</div><div class="abs" style="left:0;top:120px;width:534px;height:20px;background:#dfd78c"></div><div class="t tl" style="left:0px;top:124px;font-size:13px;color:#3c3c3c;letter-spacing:-0.25px">Flurst&#252;cke</div><div class="t tv" style="left:91px;top:122px;font-size:12.3px">Bad Liebenwerda</div><div class="t tv" style="left:197px;top:122px;font-size:12.3px">24</div><div class="t tv" style="left:239px;top:122px;font-size:12.3px">175</div><div class="abs" style="left:90px;top:135px;width:445px;height:1px;background:#777"></div><div class="abs" style="left:194px;top:120px;width:1px;height:15px;background:#777"></div><div class="abs" style="left:236px;top:120px;width:1px;height:15px;background:#777"></div><div class="abs" style="left:307px;top:120px;width:1px;height:15px;background:#777"></div><div class="abs" style="left:409px;top:120px;width:1px;height:15px;background:#777"></div><div class="abs" style="left:0;top:140px;width:534px;height:20px;background:#fff399"></div><div class="t tl" style="left:0px;top:144px;font-size:13px;color:#3c3c3c;letter-spacing:-0.15px">Bearbstatus</div><div class="t tv" style="left:90px;top:143px;font-size:12.3px;letter-spacing:0.49px">bef&#252;rwortet (Stadt)</div><div class="abs" style="left:0;top:160px;width:534px;height:20px;background:#dfd78c"></div><div class="t tl" style="left:0px;top:164px;font-size:13px;color:#3c3c3c;letter-spacing:-0.25px">Flurst&#252;cke</div><div class="t tv" style="left:91px;top:162px;font-size:12.3px">Bad Liebenwerda</div><div class="t tv" style="left:197px;top:162px;font-size:12.3px">24</div><div class="t tv" style="left:239px;top:162px;font-size:12.3px">175</div><div class="abs" style="left:90px;top:175px;width:445px;height:1px;background:#777"></div><div class="abs" style="left:194px;top:160px;width:1px;height:15px;background:#777"></div><div class="abs" style="left:236px;top:160px;width:1px;height:15px;background:#777"></div></div>
<svg style="left:484px;top:952px" width="1376" height="29" viewBox="484 952 1376 29"><line x1="487.5" y1="954" x2="487.5" y2="979" stroke="#b4b4b4" stroke-width="1.6" stroke-dasharray="1.5 2.5"/><line x1="988" y1="954" x2="988" y2="979" stroke="#b4b4b4" stroke-width="1.6" stroke-dasharray="1.5 2.5"/><line x1="1084.8" y1="954" x2="1084.8" y2="979" stroke="#b4b4b4" stroke-width="1.6" stroke-dasharray="1.5 2.5"/><line x1="541.5" y1="958.5" x2="541.5" y2="973.5" stroke="#858585" stroke-width="1.3"/><line x1="820.3" y1="958.5" x2="820.3" y2="973.5" stroke="#858585" stroke-width="1.3"/><line x1="877.3" y1="958.5" x2="877.3" y2="973.5" stroke="#858585" stroke-width="1.3"/><line x1="934.5" y1="958.5" x2="934.5" y2="973.5" stroke="#858585" stroke-width="1.3"/><rect x="502" y="955" width="5.4" height="5.4" rx="1.2" fill="none" stroke="#7d7d7d" stroke-width="1.9"/><line x1="511.3" y1="957.7" x2="526" y2="957.7" stroke="#7d7d7d" stroke-width="2"/><rect x="502" y="963.8" width="5.4" height="5.4" rx="1.2" fill="none" stroke="#2e8fe3" stroke-width="1.9"/><line x1="511.3" y1="966.5" x2="526" y2="966.5" stroke="#7d7d7d" stroke-width="2"/><rect x="502" y="972.6" width="5.4" height="5.4" rx="1.2" fill="none" stroke="#7d7d7d" stroke-width="1.9"/><line x1="511.3" y1="975.3" x2="526" y2="975.3" stroke="#7d7d7d" stroke-width="2"/><rect x="558.4" y="954.1" width="2.1" height="2.1" rx="0.4" fill="#2e8fe3"/><rect x="564.5" y="954.1" width="2.1" height="2.1" rx="0.4" fill="#2e8fe3"/><rect x="570.0" y="954.1" width="2.1" height="2.1" rx="0.4" fill="#2e8fe3"/><rect x="575.4" y="954.1" width="2.1" height="2.1" rx="0.4" fill="#2e8fe3"/><rect x="581.0" y="954.1" width="2.1" height="2.1" rx="0.4" fill="#2e8fe3"/><rect x="564.5" y="976.9" width="2.1" height="2.1" rx="0.4" fill="#2e8fe3"/><rect x="570.0" y="976.9" width="2.1" height="2.1" rx="0.4" fill="#2e8fe3"/><rect x="575.4" y="976.9" width="2.1" height="2.1" rx="0.4" fill="#2e8fe3"/><rect x="581.0" y="976.9" width="2.1" height="2.1" rx="0.4" fill="#2e8fe3"/><rect x="558.4" y="960.0" width="2.1" height="2.1" rx="0.4" fill="#2e8fe3"/><rect x="558.4" y="965.5" width="2.1" height="2.1" rx="0.4" fill="#2e8fe3"/><rect x="558.4" y="971.0" width="2.1" height="2.1" rx="0.4" fill="#2e8fe3"/><rect x="581.0" y="960.0" width="2.1" height="2.1" rx="0.4" fill="#2e8fe3"/><rect x="581.0" y="965.5" width="2.1" height="2.1" rx="0.4" fill="#2e8fe3"/><rect x="581.0" y="971.0" width="2.1" height="2.1" rx="0.4" fill="#2e8fe3"/><circle cx="570.6" cy="965.6" r="8" fill="none" stroke="#7d7d7d" stroke-width="1.9"/><line x1="564.84" y1="971.36" x2="559" y2="978.3" stroke="#7d7d7d" stroke-width="2.2"/><circle cx="609.3" cy="964.2" r="8" fill="none" stroke="#7d7d7d" stroke-width="1.9"/><line x1="603.54" y1="969.96" x2="597.6" y2="976.3" stroke="#7d7d7d" stroke-width="2.2"/><line x1="604.3" y1="964.2" x2="614.3" y2="964.2" stroke="#2e8fe3" stroke-width="1.9"/><path d="M633.2,960.5 V955.6 H638.5 M650.5,955.6 H656 V960.5 M656,972.5 V977.8 H650.5" fill="none" stroke="#2e8fe3" stroke-width="2"/><circle cx="644.2" cy="966" r="8" fill="none" stroke="#7d7d7d" stroke-width="1.9"/><line x1="638.44" y1="971.76" x2="632.8" y2="978.3" stroke="#7d7d7d" stroke-width="2.2"/><circle cx="681.2" cy="966.5" r="8" fill="none" stroke="#7d7d7d" stroke-width="1.9"/><line x1="675.44" y1="972.26" x2="669.3" y2="978.4" stroke="#7d7d7d" stroke-width="2.2"/><path d="M681.2,966.5 L692.8,955.3 M686.5,954.8 H693.4 V961.5" fill="none" stroke="#2e8fe3" stroke-width="2"/><path d="M711.3,964.8 A7.6,7.6 0 0 1 726.3,966.8 M725.8,967.8 A7.6,7.6 0 0 1 710.6,966.3" fill="none" stroke="#7d7d7d" stroke-width="2"/><path d="M722.3,964.3 L726.5,967.9 L730.4,963.9 M706.2,969.1 L710.3,965.3 L714.4,968.9" fill="none" stroke="#7d7d7d" stroke-width="2"/><path d="M758.4,974.4 A8,8 0 1 0 749.8,969.9" fill="none" stroke="#7d7d7d" stroke-width="2"/><path d="M745.6,967.2 L750.8,971.2 L753.4,965.3" fill="none" stroke="#7d7d7d" stroke-width="2"/><path d="M790.2,974.4 A8,8 0 1 1 798.8,969.9" fill="none" stroke="#7d7d7d" stroke-width="2"/><path d="M803,967.2 L797.8,971.2 L795.2,965.3" fill="none" stroke="#7d7d7d" stroke-width="2"/><g fill="none" stroke="#7d7d7d" stroke-width="2" stroke-linejoin="round"><path d="M842.5,962 V955.5 H856 V962"/><rect x="838" y="962" width="22.5" height="10.5" rx="2"/><rect x="842.5" y="968.5" width="13.5" height="9.5" fill="#fff"/></g><path d="M845.5,972 H853 M845.5,975 H853" stroke="#2e8fe3" stroke-width="1.6"/><circle cx="841" cy="964.8" r="0.7" fill="#7d7d7d"/><path d="M899.7,960.0 L904.1,975.2 L907.7,971.7 L913.8,978.8 L917.5,975.5 L911.6,969.0 L916.7,967.0 Z" fill="#fff" stroke="#7d7d7d" stroke-width="1.9" stroke-linejoin="miter"/><circle cx="897.4" cy="970.1" r="1.2" fill="#2e8fe3"/><path d="M895.2,972.9 H897.6 V977.4 M894.5,977.5 H900.6" fill="none" stroke="#2e8fe3" stroke-width="1.8"/><path d="M896.8,957 L898.6,959 M901.8,954.5 L902.2,957.2 M894.4,962 L897,962.6" stroke="#7d7d7d" stroke-width="1.3"/><path d="M953,964 V956.5 H961 L963.4,959.7 H973 V964" fill="none" stroke="#7d7d7d" stroke-width="2" stroke-linejoin="round"/><path d="M951.9,964.2 H975.5 L973.7,978 H953.7 Z" fill="#fff" stroke="#7d7d7d" stroke-width="2" stroke-linejoin="round"/><rect x="1007.5" y="956.5" width="69" height="19" fill="#fff" stroke="#9f9f9f" stroke-width="1"/><path d="M1063,965 L1067,969 L1071,965" fill="none" stroke="#333" stroke-width="1.1"/><rect x="1097.7" y="954.0" width="2.1" height="2.1" rx="0.4" fill="#2e8fe3"/><rect x="1103.6" y="954.0" width="2.1" height="2.1" rx="0.4" fill="#2e8fe3"/><rect x="1109.2" y="954.0" width="2.1" height="2.1" rx="0.4" fill="#2e8fe3"/><rect x="1114.9" y="954.0" width="2.1" height="2.1" rx="0.4" fill="#2e8fe3"/><rect x="1120.8" y="954.0" width="2.1" height="2.1" rx="0.4" fill="#2e8fe3"/><rect x="1120.8" y="959.6" width="2.1" height="2.1" rx="0.4" fill="#2e8fe3"/><rect x="1097.7" y="960.2" width="2.1" height="2.1" rx="0.4" fill="#2e8fe3"/><rect x="1097.7" y="965.5" width="2.1" height="2.1" rx="0.4" fill="#2e8fe3"/><rect x="1100.7" y="970.8" width="2.1" height="2.1" rx="0.4" fill="#2e8fe3"/><rect x="1103.0" y="976.7" width="2.1" height="2.1" rx="0.4" fill="#2e8fe3"/><path d="M1105.3,961.2 L1109.4,975.4 L1112.8,972.1 L1118.5,978.8 L1121.9,975.7 L1116.4,969.6 L1121.2,967.7 Z" fill="#fff" stroke="#7d7d7d" stroke-width="1.9" stroke-linejoin="miter"/><rect x="1158.1" y="961.9" width="2.1" height="2.1" rx="0.4" fill="#2e8fe3"/><rect x="1155.8" y="957.4" width="2.1" height="2.1" rx="0.4" fill="#2e8fe3"/><rect x="1151.7" y="954.3" width="2.1" height="2.1" rx="0.4" fill="#2e8fe3"/><rect x="1146.8" y="953.2" width="2.1" height="2.1" rx="0.4" fill="#2e8fe3"/><rect x="1141.8" y="954.3" width="2.1" height="2.1" rx="0.4" fill="#2e8fe3"/><rect x="1137.7" y="957.4" width="2.1" height="2.1" rx="0.4" fill="#2e8fe3"/><rect x="1135.4" y="961.9" width="2.1" height="2.1" rx="0.4" fill="#2e8fe3"/><rect x="1135.1" y="967.0" width="2.1" height="2.1" rx="0.4" fill="#2e8fe3"/><rect x="1137.1" y="971.7" width="2.1" height="2.1" rx="0.4" fill="#2e8fe3"/><rect x="1140.8" y="975.2" width="2.1" height="2.1" rx="0.4" fill="#2e8fe3"/><path d="M1142.7,961.5 L1146.8,975.7 L1150.2,972.4 L1155.9,979.1 L1159.3,976.0 L1153.8,969.9 L1158.6,968.0 Z" fill="#fff" stroke="#7d7d7d" stroke-width="1.9" stroke-linejoin="miter"/><rect x="1172.2" y="954.0" width="2.1" height="2.1" rx="0.4" fill="#2e8fe3"/><rect x="1177.5" y="954.0" width="2.1" height="2.1" rx="0.4" fill="#2e8fe3"/><rect x="1183.4" y="954.0" width="2.1" height="2.1" rx="0.4" fill="#2e8fe3"/><rect x="1189.3" y="954.0" width="2.1" height="2.1" rx="0.4" fill="#2e8fe3"/><rect x="1194.7" y="954.0" width="2.1" height="2.1" rx="0.4" fill="#2e8fe3"/><rect x="1172.2" y="959.6" width="2.1" height="2.1" rx="0.4" fill="#2e8fe3"/><rect x="1189.3" y="959.6" width="2.1" height="2.1" rx="0.4" fill="#2e8fe3"/><rect x="1194.7" y="959.6" width="2.1" height="2.1" rx="0.4" fill="#2e8fe3"/><rect x="1172.2" y="965.5" width="2.1" height="2.1" rx="0.4" fill="#2e8fe3"/><rect x="1172.2" y="970.8" width="2.1" height="2.1" rx="0.4" fill="#2e8fe3"/><rect x="1172.2" y="976.7" width="2.1" height="2.1" rx="0.4" fill="#2e8fe3"/><rect x="1176.9" y="970.8" width="2.1" height="2.1" rx="0.4" fill="#2e8fe3"/><rect x="1176.9" y="976.7" width="2.1" height="2.1" rx="0.4" fill="#2e8fe3"/><path d="M1179.5,961.5 L1183.6,975.7 L1187.0,972.4 L1192.7,979.1 L1196.1,976.0 L1190.6,969.9 L1195.4,968.0 Z" fill="#fff" stroke="#7d7d7d" stroke-width="1.9" stroke-linejoin="miter"/><rect x="1208.9" y="954.0" width="2.1" height="2.1" rx="0.4" fill="#2e8fe3"/><rect x="1214.8" y="954.0" width="2.1" height="2.1" rx="0.4" fill="#2e8fe3"/><rect x="1220.1" y="954.0" width="2.1" height="2.1" rx="0.4" fill="#2e8fe3"/><rect x="1226.0" y="954.0" width="2.1" height="2.1" rx="0.4" fill="#2e8fe3"/><rect x="1231.9" y="954.0" width="2.1" height="2.1" rx="0.4" fill="#2e8fe3"/><rect x="1231.9" y="959.6" width="2.1" height="2.1" rx="0.4" fill="#2e8fe3"/><rect x="1208.9" y="959.6" width="2.1" height="2.1" rx="0.4" fill="#2e8fe3"/><rect x="1208.9" y="965.5" width="2.1" height="2.1" rx="0.4" fill="#2e8fe3"/><rect x="1208.9" y="970.8" width="2.1" height="2.1" rx="0.4" fill="#2e8fe3"/><rect x="1208.9" y="976.7" width="2.1" height="2.1" rx="0.4" fill="#2e8fe3"/><rect x="1214.8" y="976.7" width="2.1" height="2.1" rx="0.4" fill="#2e8fe3"/><rect x="1214.6" y="960" width="13.6" height="13" fill="#7d7d7d"/><path d="M1219.0,961.7 L1223.1,975.9 L1226.5,972.6 L1232.2,979.3 L1235.6,976.2 L1230.1,970.1 L1234.9,968.2 Z" fill="#fff" stroke="#7d7d7d" stroke-width="1.9" stroke-linejoin="miter"/><path d="M1249.5,960.6 L1253.6,974.8 L1257.0,971.5 L1262.7,978.2 L1266.1,975.1 L1260.6,969.0 L1265.4,967.1 Z" fill="#fff" stroke="#7d7d7d" stroke-width="1.9" stroke-linejoin="miter"/><path d="M1259.5,958.3 L1262.5,961 L1267.8,954.9" fill="none" stroke="#2e8fe3" stroke-width="2"/><rect x="1277.5" y="953.5" width="126" height="26" fill="#e1e1e1" stroke="#adadad" stroke-width="1"/><path d="M1390,964.5 L1394,968.5 L1398,964.5" fill="none" stroke="#333" stroke-width="1.1"/></svg><div class="t" style="left:997.5px;top:961.3px;font-size:11px">1:</div><div class="t" style="left:1009.7px;top:961.3px;font-size:11px;letter-spacing:0.2px">792</div><div class="t" style="left:1280.5px;top:960.7px;font-size:11.5px;letter-spacing:-0.5px">alles</div>
<div class="abs" style="left:0;top:0;width:1861px;height:982px;border:1px solid #c8201f;pointer-events:none"></div>
</body></html>
